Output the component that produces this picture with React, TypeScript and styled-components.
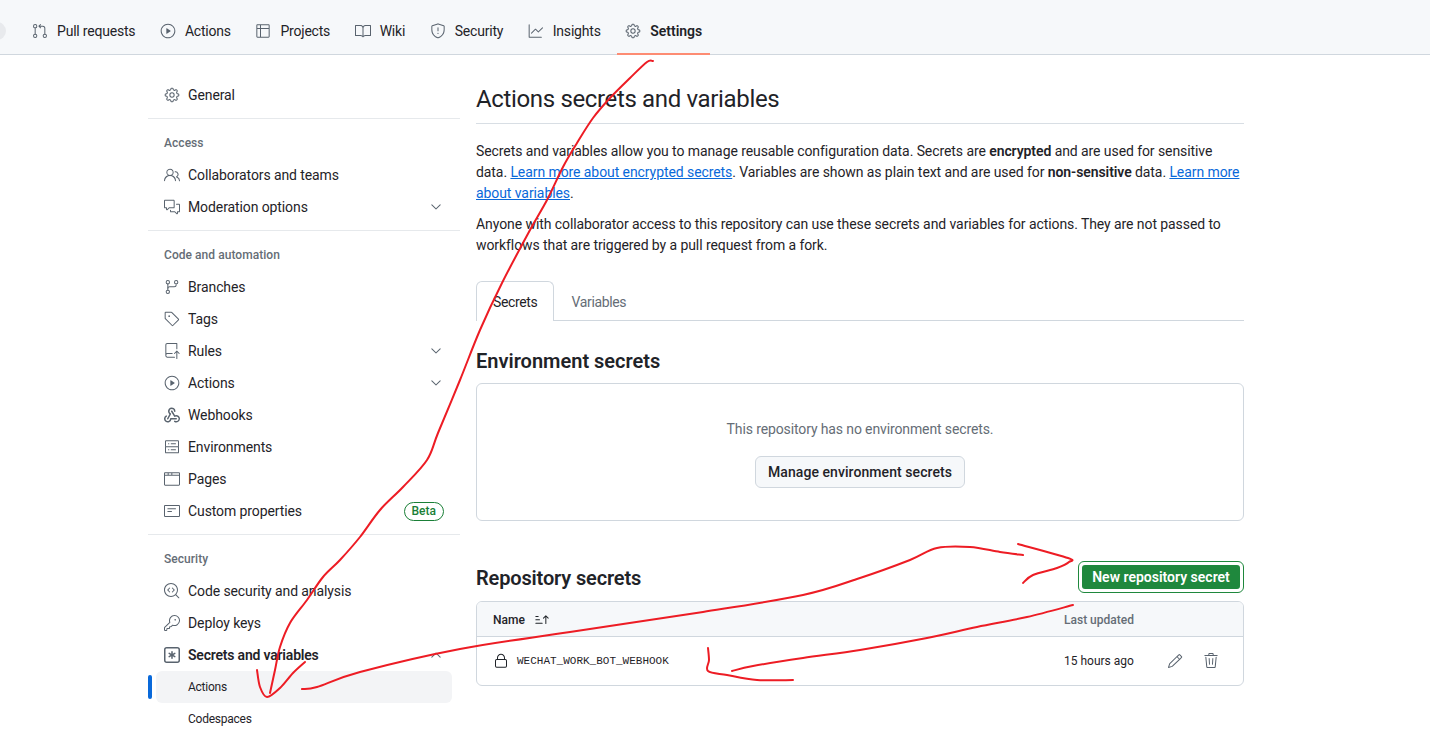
import React from "react";
import styled, { createGlobalStyle } from "styled-components";
import {
  GoBook,
  GoBrowser,
  GoChevronDown,
  GoChevronUp,
  GoCodescan,
  GoCommentDiscussion,
  GoGear,
  GoGitBranch,
  GoGitPullRequest,
  GoGraph,
  GoKey,
  GoLock,
  GoNote,
  GoPencil,
  GoPeople,
  GoPlay,
  GoRepoPush,
  GoServer,
  GoShield,
  GoSortAsc,
  GoTable,
  GoTag,
  GoTrash,
} from "react-icons/go";

const GlobalStyle = createGlobalStyle`
  html, body {
    margin: 0;
    height: 100%;
    overflow: hidden;
    background: #ffffff;
  }
  body {
    font-family: "Roboto", "Liberation Sans", sans-serif;
    font-size: 14px;
    color: #1f2328;
  }
`;

const Page = styled.div`
  position: relative;
  width: 1430px;
  height: 735px;
  overflow: hidden;
`;

const RepoNav = styled.nav`
  display: flex;
  align-items: flex-start;
  gap: 8.5px;
  height: 54px;
  padding-left: 24px;
  background: #f6f8fa;
  border-bottom: 1px solid #d0d7de;
`;

const ClippedCounter = styled.span`
  width: 20px;
  height: 18px;
  margin: 22px 9.5px 0 -38px;
  border-radius: 9px;
  background: #e8eaed;
`;

const NavTab = styled.a<{ $active?: boolean }>`
  position: relative;
  display: flex;
  align-items: center;
  gap: 9px;
  height: 46px;
  padding: 8px 8px 0;
  font-weight: ${(p) => (p.$active ? 600 : 400)};
  color: #1f2328;
  letter-spacing: ${(p) => (p.$active ? "0" : "-0.2px")};
  svg {
    color: #59636e;
  }
  &::after {
    content: "";
    display: ${(p) => (p.$active ? "block" : "none")};
    position: absolute;
    left: 0;
    right: 0;
    bottom: -1px;
    height: 2px;
    background: #fd8c73;
  }
`;

const Layout = styled.div`
  display: grid;
  grid-template-columns: 312px 768px;
  column-gap: 16px;
  padding: 24px 0 0 148px;
`;

const Sidebar = styled.aside`
  display: flex;
  flex-direction: column;
`;

const Divider = styled.div`
  height: 1px;
  margin: 7px 0 14px;
  background: #e6e9ec;
`;

const GroupHeading = styled.div`
  height: 20px;
  margin-bottom: 6px;
  padding-left: 16px;
  font-size: 12px;
  line-height: 20px;
  font-weight: 500;
  letter-spacing: 0.05px;
  color: #656d76;
`;

const SideRow = styled.a<{ $bold?: boolean; $sub?: boolean; $current?: boolean }>`
  position: relative;
  display: flex;
  align-items: center;
  gap: 8px;
  height: 32px;
  margin: 0 8px;
  padding: 0 8px;
  border-radius: 6px;
  font-size: ${(p) => (p.$sub ? "12px" : "14px")};
  font-weight: ${(p) => (p.$bold ? 600 : 400)};
  letter-spacing: ${(p) => (p.$sub ? "-0.25px" : p.$bold ? "-0.2px" : "-0.1px")};
  background: ${(p) => (p.$current ? "#f3f4f6" : "transparent")};
  svg {
    color: #59636e;
    flex: none;
  }
  &::before {
    content: "";
    display: ${(p) => (p.$current ? "block" : "none")};
    position: absolute;
    left: -8px;
    top: 4px;
    width: 4px;
    height: 24px;
    border-radius: 6px;
    background: #0969da;
  }
`;

const SubLabel = styled.span`
  padding-left: 24px;
`;

const RowLabel = styled.span`
  flex: 1;
`;

const BetaLabel = styled.span`
  height: 19px;
  padding: 0 7px;
  border: 1px solid #1a7f37;
  border-radius: 10px;
  box-sizing: border-box;
  font-size: 12px;
  font-weight: 500;
  line-height: 17px;
  letter-spacing: 0;
  color: #1a7f37;
`;

const Main = styled.main`
  display: flex;
  flex-direction: column;
`;

const Title = styled.h1`
  margin: 0 0 17px;
  height: 36px;
  padding-bottom: 8px;
  border-bottom: 1px solid #d8dee4;
  font-size: 24px;
  line-height: 40px;
  font-weight: 400;
  letter-spacing: -0.35px;
`;

const Paragraph = styled.p`
  margin: 0 0 10px;
  line-height: 21px;
  letter-spacing: -0.08px;
  b {
    font-weight: 600;
  }
  a {
    color: #0969da;
    text-decoration: underline;
  }
`;

const TabBar = styled.div`
  display: flex;
  height: 39px;
  margin-top: 15px;
  border-bottom: 1px solid #d0d7de;
`;

const Tab = styled.a<{ $active?: boolean }>`
  box-sizing: border-box;
  height: 40px;
  padding: 0 16px;
  line-height: 41px;
  letter-spacing: -0.35px;
  color: ${(p) => (p.$active ? "#1f2328" : "#656d76")};
  background: ${(p) => (p.$active ? "#ffffff" : "transparent")};
  border: 1px solid ${(p) => (p.$active ? "#d0d7de" : "transparent")};
  border-bottom: none;
  border-radius: 6px 6px 0 0;
`;

const SectionTitle = styled.h2`
  margin: 0;
  font-size: 20px;
  line-height: 30px;
  font-weight: 600;
`;

const EnvTitle = styled(SectionTitle)`
  margin: 25px 0 7px;
`;

const RepoTitle = styled(SectionTitle)`
  padding-top: 2px;
  letter-spacing: -0.15px;
`;

const EmptyBox = styled.div`
  box-sizing: border-box;
  display: flex;
  flex-direction: column;
  align-items: center;
  height: 138px;
  padding-top: 35px;
  border: 1px solid #d0d7de;
  border-radius: 6px;
`;

const EmptyText = styled.div`
  line-height: 21px;
  letter-spacing: -0.12px;
  color: #656d76;
`;

const PlainButton = styled.button`
  box-sizing: border-box;
  width: 210px;
  height: 32px;
  margin-top: 16px;
  border: 1px solid #d0d7de;
  border-radius: 6px;
  background: #f6f8fa;
  font: 500 14px "Roboto", "Liberation Sans", sans-serif;
  letter-spacing: 0.07px;
  color: #1f2328;
`;

const SectionHead = styled.div`
  display: flex;
  align-items: center;
  justify-content: space-between;
  margin: 40px 0 8px;
`;

const FocusRing = styled.div`
  box-sizing: border-box;
  height: 32px;
  padding: 3px;
  border: 1px solid #1f883d;
  border-radius: 6px;
`;

const GreenButton = styled.button`
  display: block;
  width: 158px;
  height: 24px;
  padding: 0;
  border: none;
  border-radius: 3px;
  background: #1f883d;
  font: 600 14px "Roboto", "Liberation Sans", sans-serif;
  color: #ffffff;
`;

const SecretsTable = styled.div`
  border: 1px solid #d0d7de;
  border-radius: 6px;
  overflow: hidden;
`;

const HeadRow = styled.div`
  display: flex;
  align-items: center;
  height: 32px;
  padding: 2px 0 0 16px;
  background: #f6f8fa;
  border-bottom: 1px solid #d0d7de;
  font-size: 12px;
  font-weight: 500;
`;

const NameHead = styled.div`
  display: flex;
  align-items: center;
  gap: 9px;
  flex: 1;
`;

const UpdatedHead = styled.div`
  width: 179px;
  color: #656d76;
`;

const BodyRow = styled.div`
  display: flex;
  align-items: center;
  height: 48px;
  padding-left: 16px;
`;

const SecretName = styled.code`
  flex: 1;
  margin-left: 8px;
  font-family: "Liberation Mono", monospace;
  font-size: 11px;
`;

const UpdatedCell = styled.div`
  width: 103px;
  font-size: 12px;
`;

const RowActions = styled.div`
  display: flex;
  gap: 20px;
  width: 76px;
  color: #59636e;
`;

const NextTitle = styled(SectionTitle)`
  margin-top: 45px;
`;

const InkLayer = styled.svg`
  position: absolute;
  inset: 0;
  pointer-events: none;
`;

const WebhookIcon = ({ size }: { size: number }) => (
  <svg width={size} height={size} viewBox="0 0 16 16" fill="currentColor">
    <path d="M5.5 4.25a2.25 2.25 0 0 1 4.5 0 .75.75 0 0 0 1.5 0 3.75 3.75 0 1 0-6.14 2.889l-2.272 4.258a.75.75 0 0 0 1.324.706L7 7.25a.75.75 0 0 0-.309-1.015A2.25 2.25 0 0 1 5.5 4.25Z" />
    <path d="M7.364 3.607a.75.75 0 0 1 1.03.257l2.608 4.349a3.75 3.75 0 1 1-.628 6.785.75.75 0 0 1 .752-1.299 2.25 2.25 0 1 0-.033-3.88.75.75 0 0 1-1.03-.256L7.107 4.636a.75.75 0 0 1 .257-1.03Z" />
    <path d="M2.9 8.776A.75.75 0 0 1 2.625 9.8 2.25 2.25 0 1 0 6 11.75a.75.75 0 0 1 .75-.751h5.5a.75.75 0 0 1 0 1.5H7.425a3.751 3.751 0 1 1-5.55-3.998.75.75 0 0 1 1.024.274Z" />
  </svg>
);

const KeyAsteriskIcon = ({ size }: { size: number }) => (
  <svg width={size} height={size} viewBox="0 0 16 16" fill="currentColor">
    <path d="M0 2.75A2.75 2.75 0 0 1 2.75 0h10.5A2.75 2.75 0 0 1 16 2.75v10.5A2.75 2.75 0 0 1 13.25 16H2.75A2.75 2.75 0 0 1 0 13.25ZM2.75 1.5c-.69 0-1.25.56-1.25 1.25v10.5c0 .69.56 1.25 1.25 1.25h10.5c.69 0 1.25-.56 1.25-1.25V2.75c0-.69-.56-1.25-1.25-1.25Z" />
    <path d="M8 4a.75.75 0 0 1 .75.75V6.7l1.69-.975a.75.75 0 0 1 .75 1.3L9.5 8l1.69.976a.75.75 0 0 1-.75 1.298L8.75 9.3v1.951a.75.75 0 0 1-1.5 0V9.299l-1.69.976a.75.75 0 0 1-.75-1.3L6.5 8l-1.69-.975a.75.75 0 0 1 .75-1.3l1.69.976V4.75A.75.75 0 0 1 8 4Z" />
  </svg>
);

type Point = [number, number];

// the hand drawn annotations on top of the screenshot
const strokes: Point[][] = [
  [
    [653, 61], [647, 62], [630, 78], [610, 98], [593, 118], [577, 143], [563, 167],
    [547, 200], [530, 230], [502, 283], [480, 330], [460, 380], [438, 433], [427, 460],
    [403, 487], [380, 510], [360, 537], [340, 560], [323, 577], [307, 600], [290, 623],
    [280, 647], [275, 670], [270, 693],
  ],
  [[257, 670], [260, 687], [267, 697], [280, 688], [293, 673], [305, 662]],
  [
    [302, 689], [317, 687], [360, 672], [460, 649], [570, 632], [703, 612], [803, 595],
    [860, 578], [910, 560], [937, 548], [970, 547], [1000, 552], [1023, 555],
  ],
  [[1018, 544], [1068, 558], [1069, 562], [1057, 568], [1033, 575], [1023, 583]],
  [
    [732, 671], [753, 666], [803, 658], [860, 650], [927, 638], [977, 627], [1027, 617],
    [1073, 605],
  ],
  [[708, 648], [709, 660], [708, 671], [727, 675], [757, 680], [793, 680]],
];

const toPath = (pts: Point[]) =>
  pts
    .map((p, i) => {
      if (i === 0) return `M${p[0]} ${p[1]}`;
      const prev = pts[i - 1];
      const next = pts[i + 1] || p;
      const before = pts[i - 2] || prev;
      const c1 = [prev[0] + (p[0] - before[0]) / 6, prev[1] + (p[1] - before[1]) / 6];
      const c2 = [p[0] - (next[0] - prev[0]) / 6, p[1] - (next[1] - prev[1]) / 6];
      return `C${c1[0]} ${c1[1]} ${c2[0]} ${c2[1]} ${p[0]} ${p[1]}`;
    })
    .join(" ");

const tabs = [
  { icon: GoGitPullRequest, label: "Pull requests" },
  { icon: GoPlay, label: "Actions" },
  { icon: GoTable, label: "Projects" },
  { icon: GoBook, label: "Wiki" },
  { icon: GoShield, label: "Security" },
  { icon: GoGraph, label: "Insights" },
  { icon: GoGear, label: "Settings", active: true },
];

type SideItem = {
  icon: React.ElementType;
  label: string;
  chevron?: boolean;
  beta?: boolean;
};

const accessItems: SideItem[] = [
  { icon: GoPeople, label: "Collaborators and teams" },
  { icon: GoCommentDiscussion, label: "Moderation options", chevron: true },
];

const codeItems: SideItem[] = [
  { icon: GoGitBranch, label: "Branches" },
  { icon: GoTag, label: "Tags" },
  { icon: GoRepoPush, label: "Rules", chevron: true },
  { icon: GoPlay, label: "Actions", chevron: true },
  { icon: WebhookIcon, label: "Webhooks" },
  { icon: GoServer, label: "Environments" },
  { icon: GoBrowser, label: "Pages" },
  { icon: GoNote, label: "Custom properties", beta: true },
];

const securityItems: SideItem[] = [
  { icon: GoCodescan, label: "Code security and analysis" },
  { icon: GoKey, label: "Deploy keys" },
];

const SideLink = ({ item }: { item: SideItem }) => (
  <SideRow>
    <item.icon size={16} />
    <RowLabel>{item.label}</RowLabel>
    {item.chevron && <GoChevronDown size={16} />}
    {item.beta && <BetaLabel>Beta</BetaLabel>}
  </SideRow>
);

export default function App() {
  return (
    <Page>
      <GlobalStyle />
      <RepoNav>
        <ClippedCounter />
        {tabs.map((t) => (
          <NavTab key={t.label} $active={t.active}>
            <t.icon size={16} />
            {t.label}
          </NavTab>
        ))}
      </RepoNav>
      <Layout>
        <Sidebar>
          <SideLink item={{ icon: GoGear, label: "General" }} />
          <Divider />
          <GroupHeading>Access</GroupHeading>
          {accessItems.map((i) => (
            <SideLink key={i.label} item={i} />
          ))}
          <Divider />
          <GroupHeading>Code and automation</GroupHeading>
          {codeItems.map((i) => (
            <SideLink key={i.label} item={i} />
          ))}
          <Divider />
          <GroupHeading>Security</GroupHeading>
          {securityItems.map((i) => (
            <SideLink key={i.label} item={i} />
          ))}
          <SideRow $bold>
            <KeyAsteriskIcon size={16} />
            <RowLabel>Secrets and variables</RowLabel>
            <GoChevronUp size={16} />
          </SideRow>
          <SideRow $sub $current>
            <SubLabel>Actions</SubLabel>
          </SideRow>
          <SideRow $sub>
            <SubLabel>Codespaces</SubLabel>
          </SideRow>
        </Sidebar>
        <Main>
          <Title>Actions secrets and variables</Title>
          <Paragraph>
            Secrets and variables allow you to manage reusable configuration data. Secrets are{" "}
            <b>encrypted</b> and are used for sensitive data.{" "}
            <a>Learn more about encrypted secrets</a>. Variables are shown as plain text and are
            used for <b>non-sensitive</b> data. <a>Learn more about variables</a>.
          </Paragraph>
          <Paragraph>
            Anyone with collaborator access to this repository can use these secrets and variables
            for actions. They are not passed to workflows that are triggered by a pull request from
            a fork.
          </Paragraph>
          <TabBar>
            <Tab $active>Secrets</Tab>
            <Tab>Variables</Tab>
          </TabBar>
          <EnvTitle>Environment secrets</EnvTitle>
          <EmptyBox>
            <EmptyText>This repository has no environment secrets.</EmptyText>
            <PlainButton>Manage environment secrets</PlainButton>
          </EmptyBox>
          <SectionHead>
            <RepoTitle>Repository secrets</RepoTitle>
            <FocusRing>
              <GreenButton>New repository secret</GreenButton>
            </FocusRing>
          </SectionHead>
          <SecretsTable>
            <HeadRow>
              <NameHead>
                Name <GoSortAsc size={16} />
              </NameHead>
              <UpdatedHead>Last updated</UpdatedHead>
            </HeadRow>
            <BodyRow>
              <GoLock size={16} />
              <SecretName>WECHAT_WORK_BOT_WEBHOOK</SecretName>
              <UpdatedCell>15 hours ago</UpdatedCell>
              <RowActions>
                <GoPencil size={16} />
                <GoTrash size={16} />
              </RowActions>
            </BodyRow>
          </SecretsTable>
          <NextTitle>Organization secrets</NextTitle>
        </Main>
      </Layout>
      <InkLayer width={1430} height={735} fill="none" stroke="#ed1c24" strokeWidth={2}>
        {strokes.map((s, i) => (
          <path key={i} d={toPath(s)} strokeLinecap="round" strokeLinejoin="round" />
        ))}
      </InkLayer>
    </Page>
  );
}
